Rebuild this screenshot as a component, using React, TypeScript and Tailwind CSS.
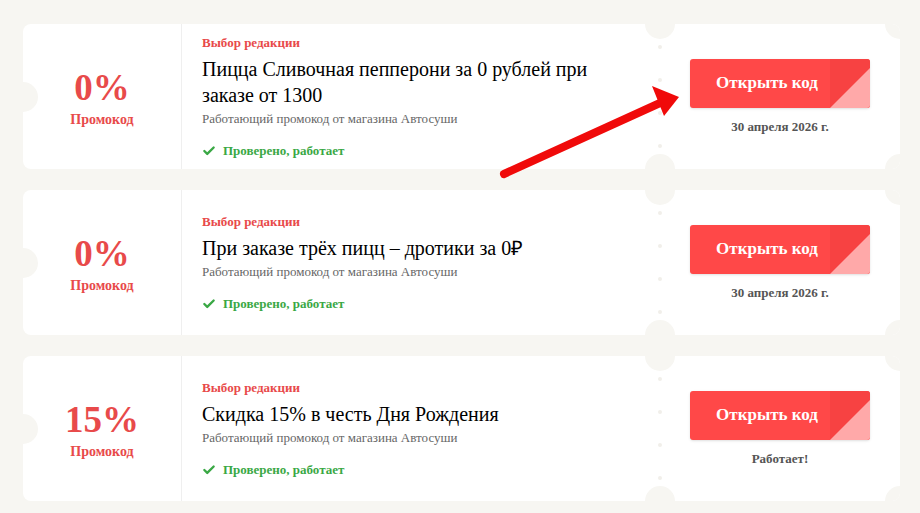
import React from 'react';
import { Check } from 'lucide-react';

interface Coupon {
  value: string;
  title: string;
  footer: string;
}

const coupons: Coupon[] = [
  { value: '0%', title: 'Пицца Сливочная пепперони за 0 рублей при заказе от 1300', footer: '30 апреля 2026 г.' },
  { value: '0%', title: 'При заказе трёх пицц – дротики за 0₽', footer: '30 апреля 2026 г.' },
  { value: '15%', title: 'Скидка 15% в честь Дня Рождения', footer: 'Работает!' },
];

const CouponCard: React.FC<{ coupon: Coupon }> = ({ coupon }) => (
  <div className="relative h-[145px] bg-white rounded-lg flex overflow-hidden">
    {/* left notch */}
    <div className="absolute -left-[15px] top-[58px] w-[30px] h-[30px] rounded-full bg-[#f7f6f2]" />

    <div className="w-[159px] shrink-0 border-r border-[#efefef] flex flex-col items-center justify-center pt-[6px]">
      <div className="text-[37px] leading-[36px] font-bold text-[#e84a4a]">{coupon.value}</div>
      <div className="text-[14px] leading-[18px] font-bold text-[#e84a4a] mt-[5px]">Промокод</div>
    </div>

    <div className="flex-1 pl-5 pr-6 flex flex-col justify-center">
      <div className="text-[13px] leading-[16px] font-bold text-[#e84a4a]">Выбор редакции</div>
      <div className="text-[20px] leading-[26px] text-black mt-[5px]">{coupon.title}</div>
      <div className="text-[13px] leading-[16px] text-[#666666] mt-[3px]">Работающий промокод от магазина Автосуши</div>
      <div className="flex items-center gap-[7px] mt-4">
        <Check size={14} strokeWidth={4} className="text-[#3aa845]" />
        <span className="text-[13px] leading-[16px] font-bold text-[#3aa845]">Проверено, работает</span>
      </div>
    </div>

    <div className="relative w-[240px] shrink-0 flex flex-col items-center justify-center">
      {/* ticket cut circles */}
      <div className="absolute -left-[15px] -top-[15px] w-[30px] h-[30px] rounded-full bg-[#f7f6f2]" />
      <div className="absolute -left-[15px] -bottom-[15px] w-[30px] h-[30px] rounded-full bg-[#f7f6f2]" />
      <div className="absolute -right-[15px] -top-[15px] w-[30px] h-[30px] rounded-full bg-[#f7f6f2]" />
      <div className="absolute -right-[15px] -bottom-[15px] w-[30px] h-[30px] rounded-full bg-[#f7f6f2]" />
      <div className="absolute -left-[2px] top-[21px] flex flex-col gap-[29px]">
        <span className="w-1 h-1 rounded-full bg-[#f1efea]" />
        <span className="w-1 h-1 rounded-full bg-[#f1efea]" />
        <span className="w-1 h-1 rounded-full bg-[#f1efea]" />
        <span className="w-1 h-1 rounded-full bg-[#f1efea]" />
      </div>

      <button className="relative w-[180px] h-[49px] rounded-[3px] bg-[#ff4848] overflow-hidden flex items-center shadow-sm">
        <span className="flex-1 pr-[26px] text-white text-[17px] font-bold">Открыть код</span>
        <span className="absolute right-0 top-0 w-[40px] h-full bg-[#f74242]">
          <svg width="40" height="49" viewBox="0 0 40 49" className="block">
            <polygon points="40,9 40,49 0,49" fill="#ffa9a9" />
          </svg>
        </span>
      </button>
      <div className="mt-[11px] text-[13px] leading-[16px] font-bold text-[#555555]">{coupon.footer}</div>
    </div>
  </div>
);

export default function App() {
  return (
    <div className="relative min-h-screen bg-[#f7f6f2] pt-6 pl-[23px] pr-5 pb-3" style={{ fontFamily: '"Liberation Serif", "Times New Roman", serif' }}>
      <div className="flex flex-col gap-[21px]">
        {coupons.map((c, i) => (
          <CouponCard key={i} coupon={c} />
        ))}
      </div>

      {/* annotation arrow */}
      <svg className="absolute left-0 top-0 pointer-events-none" width="920" height="513" viewBox="0 0 920 513">
        <line x1="504" y1="174" x2="660" y2="103" stroke="#f00a0a" strokeWidth="8" strokeLinecap="round" />
        <polygon points="652,86 679,97 664,116" fill="#f00a0a" />
      </svg>
    </div>
  );
}
